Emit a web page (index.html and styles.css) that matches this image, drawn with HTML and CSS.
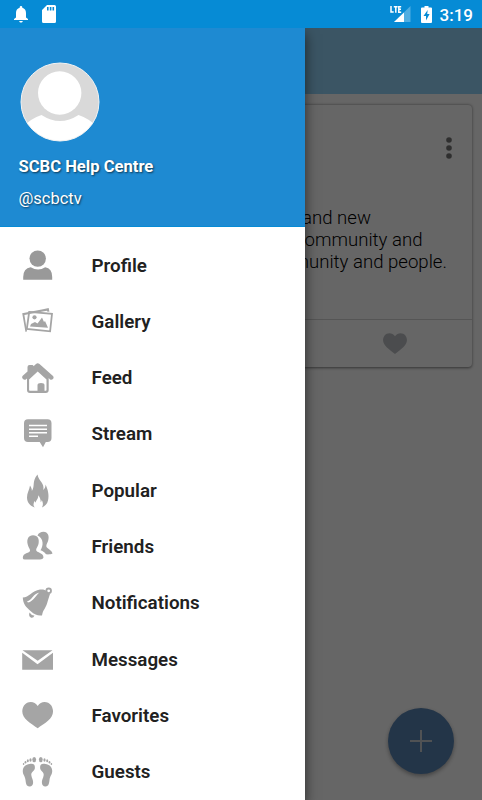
FILE: index.html
```html
<!DOCTYPE html>
<html lang="en">
<head>
    <meta charset="utf-8">
    <title>SCBC</title>
    <link rel="stylesheet" href="styles.css">
</head>
<body>
    <!-- Status bar -->
    <header class="status-bar">
        <svg class="bell" width="14" height="17" viewBox="0 0 14 17"><path d="M7 0c-.8 0-1.3.6-1.3 1.3v.5C3.400 2.400 2 4.300 2 7v4.500L0 13v1h14v-1l-2-1.500V7c0-2.700-1.400-4.600-3.700-5.200v-.5C8.300.6 7.800 0 7 0zM5.200 15c.2 1 .9 1.600 1.800 1.600S8.600 16 8.800 15z"/></svg>
        <svg class="sd-card" width="14" height="18" viewBox="0 0 14 18"><path fill-rule="evenodd" d="M5 0h7.500Q14 0 14 1.500v15Q14 18 12.500 18h-11Q0 18 0 16.500V5zM5 2v3.500h1.600V2zM7.800 2v3.500h1.600V2zM10.500 2v3.500h1.600V2z"/></svg>
        <span class="spacer"></span>
        <svg class="signal" width="21" height="18" viewBox="0 0 21 18">
            <path d="M20.500 1v16H4z" opacity=".3"/>
            <path d="M14 7.500V17H4z"/>
            <path fill="none" stroke="#fff" stroke-width="1.500" d="M1 1v6h2.700M3.800 1.700h3.800M5.800 1.700v6M11.200 1.700H8.800v5.500h2.400M8.800 4.300h2.200"/>
        </svg>
        <svg class="battery" width="11" height="17" viewBox="0 0 11 17"><path fill-rule="evenodd" d="M3.500 0h4v1.600H10q1 0 1 1V16q0 1-1 1H1q-1 0-1-1V2.600q0-1 1-1h2.500zM6.700 4L2.500 10H5v4.500L8.600 8H6.200z"/></svg>
        <span class="clock">3:19</span>
    </header>

    <div class="screen">
        <!-- Feed page -->
        <div class="toolbar"></div>
        <main class="card">
            <div class="card-header">
                <svg width="6" height="22" viewBox="0 0 6 22"><circle cx="3" cy="3" r="2.800"/><circle cx="3" cy="11" r="2.800"/><circle cx="3" cy="19" r="2.800"/></svg>
            </div>
            <div class="card-text">
                <p>and new</p>
                <p>community and</p>
                <p>community and people.</p>
            </div>
            <div class="card-actions">
                <svg width="24" height="21" viewBox="0 0 30 26"><path d="M15 4C12-1 5-1 2 3c-6 9 3 16 13 23C25 19 34 12 28 3c-3-4-10-4-13 1z"/></svg>
            </div>
        </main>
        <div class="fab">
            <svg width="22" height="22" viewBox="0 0 22 22"><path d="M11 0v22M0 11h22"/></svg>
        </div>
        <div class="scrim"></div>

        <!-- Side menu -->
        <aside class="drawer">
            <div class="profile">
                <svg class="avatar" width="80" height="80" viewBox="0 0 80 80">
                    <defs><clipPath id="round"><circle cx="40" cy="40" r="39"/></clipPath></defs>
                    <circle cx="40" cy="40" r="39" fill="#d9d9d9"/>
                    <g fill="#fff" clip-path="url(#round)">
                        <circle cx="39.700" cy="31" r="21.700"/>
                        <path d="M0 80V68Q9 57 21.500 53q18.500 12 37 0Q71 57 80 68v12z"/>
                    </g>
                    <circle cx="40" cy="40" r="39" fill="none" stroke="#f3f3f3"/>
                </svg>
                <div class="name">SCBC Help Centre</div>
                <div class="handle">@scbctv</div>
            </div>
            <nav class="menu">
                <a class="item profile-item">
                    <svg viewBox="0 0 32 32"><path d="M1.200 29.800V27q0-8.500 7.500-9.700 7.500 4.500 14.500 0 7 1.200 7 9.700v2.800z"/><circle cx="15.700" cy="8.600" r="8.200"/></svg>
                    <span>Profile</span>
                </a>
                <a class="item">
                    <svg viewBox="0 0 32 32">
                        <path d="M.2 7.200L21 3.300l5.700-1.200.7 3.700-2.200-.2-.4-.8L2.400 9l2.600 16.300-1.500.6z"/>
                        <path d="M7.200 5.900l22.800 2-1.900 17.400-23.300-2.300z" class="line"/>
                        <circle cx="12.500" cy="11.300" r="2.100"/>
                        <path d="M8 20.500l1-2.500 4-2 2.500 1.500L20 11.500l2 4.500 1-1 3 6.800z"/>
                    </svg>
                    <span>Gallery</span>
                </a>
                <a class="item">
                    <svg viewBox="0 0 32 32">
                        <path d="M.6 16.500Q-.5 15 1 13.500l4.500-4V5q0-2 2-2h2.700q1.300 0 1.300 1.300L14 2q1.600-1.500 3.500 0L31 14q1.200 1.500 0 3-1.500 1.500-3.200.3L26.700 16v12q0 3-3 3H8q-3 0-3-3V16.500l-1.200 1q-1.800.7-3.200-1z"/>
                        <path class="cut" d="M15.700 9.500l8.800 8V28q0 .7-.7.700h-1.300V23q0-2-3.500-2T15.500 23v5.700H7.800q-.7 0-.7-.7V17.500z"/>
                    </svg>
                    <span>Feed</span>
                </a>
                <a class="item">
                    <svg viewBox="0 0 32 32">
                        <path d="M6 1.300h19.500q4 0 4 4V20q0 4-4 4h-1.700L21 29.300 17.700 24H6q-4 0-4-4V5.300q0-4 4-4z"/>
                        <path d="M7 7.500h18M7 11.300h18M7 14.800h18M7 18.300h9" class="cut-line"/>
                    </svg>
                    <span>Stream</span>
                </a>
                <a class="item">
                    <svg class="flame" viewBox="0 0 32 34"><path d="M15.500.5c1 6.500 7.300 8.500 5.800 15.500 1.600-1.500 2.400-3.300 2.200-5.500 2.200 4.500 4 10.500 2.500 16-.8 3.500-3 5.700-6 7 1.700-3 .8-5.500-.3-7.500 0 1-.4 1.700-1 2.200.1-3-.8-5-2.500-7 .3 3.500-2 4.800-2.700 7.500-.5-.6-.7-1.300-.8-2-1.500 2.700-1.700 4.800 0 6.800-4.500-1.500-7.700-5-7.700-10C5 19 7.300 16 8 11.500c1 1.500 2 3.300 1.900 5.500C13.500 11 9.500 8 15.500.5z"/></svg>
                    <span>Popular</span>
                </a>
                <a class="item">
                    <svg viewBox="0 0 32 32">
                        <path d="M15.500 4.500C16.500 2 19 .8 21.500.8c4.500.2 6 4.200 4.700 8.700-.6 2-1.700 3.500-1.900 5.500 0 2.500 5.500 3.800 6.200 7.500-2 1-4.600 1-6.500.8-1.500-2.300-3.500-3.300-5.500-4 3-4.300 3.500-11.800-3-14.800z"/>
                        <path d="M11 4.300c5 0 6.600 4 5.500 8.700-.7 2.700-2.200 4-2.400 6 .5 3 7.400 2.300 7.400 7.500Q21 28.500 18 28.500H3q-2.200 0-2.200-1.500c0-5.700 7-4.500 7.300-7.500-.3-2-1.900-3.500-2.500-6.500-1-4.700.9-8.700 5.400-8.700z"/>
                    </svg>
                    <span>Friends</span>
                </a>
                <a class="item">
                    <svg viewBox="0 0 32 32">
                        <path d="M.8 10.500C7 10.500 10 3.500 18 2.500c3-.4 5 .2 7 1.500L28 7c-2 6-2 7-3.500 11-1.500 4-3.500 5-4.500 10.500-4 .5-7-.5-11.500-4.500-4.500-4-7.500-7-7.700-13.500z"/>
                        <path class="cut" d="M5 14.500C10 13 11 7 17.500 5.500 14 8 11.500 14.500 6 15.500z"/>
                        <circle cx="26.700" cy="3.800" r="2.300" class="line cut"/>
                        <path d="M7.500 25.500q2.500 3.500 5 3-1.300 3-3.700 2-2.500-1.500-1.300-5z"/>
                    </svg>
                    <span>Notifications</span>
                </a>
                <a class="item">
                    <svg viewBox="0 0 32 32"><path d="M.5 6.300h30L15.700 16.800zM.2 8.800l15.300 11.500L31 8.800v17H.2z"/></svg>
                    <span>Messages</span>
                </a>
                <a class="item">
                    <svg viewBox="0 0 32 32"><path d="M15.700 6C12.500.8 5.500 1 2 5.500c-6 11 5 16.500 13.700 22.700C24.500 22 35.300 16.500 29.300 5.500 25.800 1 18.900.8 15.700 6z"/></svg>
                    <span>Favorites</span>
                </a>
                <a class="item">
                    <svg viewBox="0 0 32 32">
                        <path id="sole" d="M7.500 8c4-.7 5.600.5 5.400 4-.2 3-4 4-3.600 7 .3 3.300 2.200 5 1.800 8-.3 2.500-1.500 3.500-3.600 3.400-3.500 0-3.600-3.400-4-6.400C2.800 19 .5 18.500.8 14.500c.2-3.700 3-6 6.700-6.500z"/>
                        <g id="toes"><ellipse cx="12.200" cy="3.600" rx="1.900" ry="2.700"/><ellipse cx="8.500" cy="4" rx="1.100" ry="1.800"/><ellipse cx="5.800" cy="4.800" rx="1" ry="1.500"/><ellipse cx="3.500" cy="6.300" rx=".9" ry="1.300"/><ellipse cx="1.600" cy="8" rx=".8" ry="1"/></g>
                        <use href="#sole" transform="matrix(-1 0 0 1 31 0)"/>
                        <use href="#toes" transform="matrix(-1 0 0 1 31 0)"/>
                    </svg>
                    <span>Guests</span>
                </a>
            </nav>
        </aside>
    </div>
</body>
</html>
```

FILE: styles.css
```css
* {
    box-sizing: border-box;
}

body {
    margin: 0;
    height: 100vh;
    display: flex;
    flex-direction: column;
    overflow: hidden;
    font-family: Roboto, sans-serif;
}

.status-bar {
    display: flex;
    align-items: center;
    height: 28px;
    padding: 0 9px 0 14px;
    background-color: #068bd5;
    color: #fff;
    fill: #fff;
}

.sd-card {
    margin-left: 14px;
}

.spacer {
    flex: 1;
}

.battery {
    margin: 0 8px 0 10px;
}

.clock {
    font-size: 17px;
    font-weight: 500;
    line-height: 28px;
    padding-top: 1px;
}

.screen {
    position: relative;
    flex: 1;
    min-height: 0;
    overflow: hidden;
    background-color: #fff;
}

.toolbar {
    height: 66px;
    background-color: #93d4fa;
}

/* Card behind the menu */
.card {
    margin: 11px 10px 0;
    height: 262px;
    display: flex;
    flex-direction: column;
    border-radius: 4px;
    background-color: #fff;
    box-shadow: 0 0.5px 3px rgba(0, 0, 0, 0.5);
}

.card-header {
    display: flex;
    justify-content: flex-end;
    padding: 32px 20px 0 0;
    fill: #777;
}

.card-text {
    flex: 1;
    padding: 48px 26px 0 0;
    font-size: 18.600px;
    font-weight: 300;
    line-height: 22px;
}

.card-text p {
    margin: 0 0 0 292px;
    white-space: nowrap;
}

.card-text p:nth-child(2) {
    margin-left: 285px;
}

.card-text p:nth-child(3) {
    margin-left: 246px;
}

.card-actions {
    display: flex;
    align-items: center;
    justify-content: flex-end;
    height: 48px;
    padding-right: 65px;
    border-top: 1px solid #d5d5d5;
    fill: #bcbfc3;
}

.fab {
    position: absolute;
    right: 28px;
    bottom: 26px;
    width: 66px;
    height: 66px;
    display: flex;
    align-items: center;
    justify-content: center;
    border-radius: 50%;
    background-color: #5884b4;
    box-shadow: 0 2px 4px rgba(0, 0, 0, 0.35);
}

.fab path {
    stroke: #c8cdd2;
    stroke-width: 2;
}

.scrim {
    position: absolute;
    inset: 0;
    background-color: rgba(0, 0, 0, 0.6);
}

/* Side menu */
.drawer {
    position: absolute;
    top: 0;
    bottom: 0;
    left: 0;
    width: 305px;
    overflow: hidden;
    background-color: #fff;
    box-shadow: 0 6px 12px rgba(0, 0, 0, 0.6);
}

.profile {
    height: 199px;
    padding: 34px 18.500px 0;
    background-color: #1e8ad2;
    border-bottom: 1px solid #068bd5;
    color: #fff;
    text-shadow: 1px 1px 2px rgba(0, 0, 0, 0.6);
}

.avatar {
    display: block;
    margin-left: 1.500px;
}

.name {
    margin-top: 14px;
    font-size: 16.600px;
    font-weight: 700;
    line-height: 22px;
}

.handle {
    margin-top: 10px;
    font-size: 16.500px;
    line-height: 22px;
}

.menu {
    padding-top: 10.400px;
}

.item {
    display: flex;
    align-items: center;
    height: 56.300px;
    padding-left: 22px;
    color: #212121;
    font-size: 18.800px;
    font-weight: 600;
}

.item svg {
    width: 32px;
    height: 32px;
    margin-right: 37.500px;
    fill: #a5a5a5;
}

.item .flame {
    height: 34px;
}

.profile-item svg {
    fill: #999;
}

.item .line {
    fill: none;
    stroke: #a5a5a5;
    stroke-width: 1.800;
}

.item .cut {
    fill: #fff;
}

.item .cut-line {
    stroke: #fff;
    stroke-width: 1.500;
}
```
